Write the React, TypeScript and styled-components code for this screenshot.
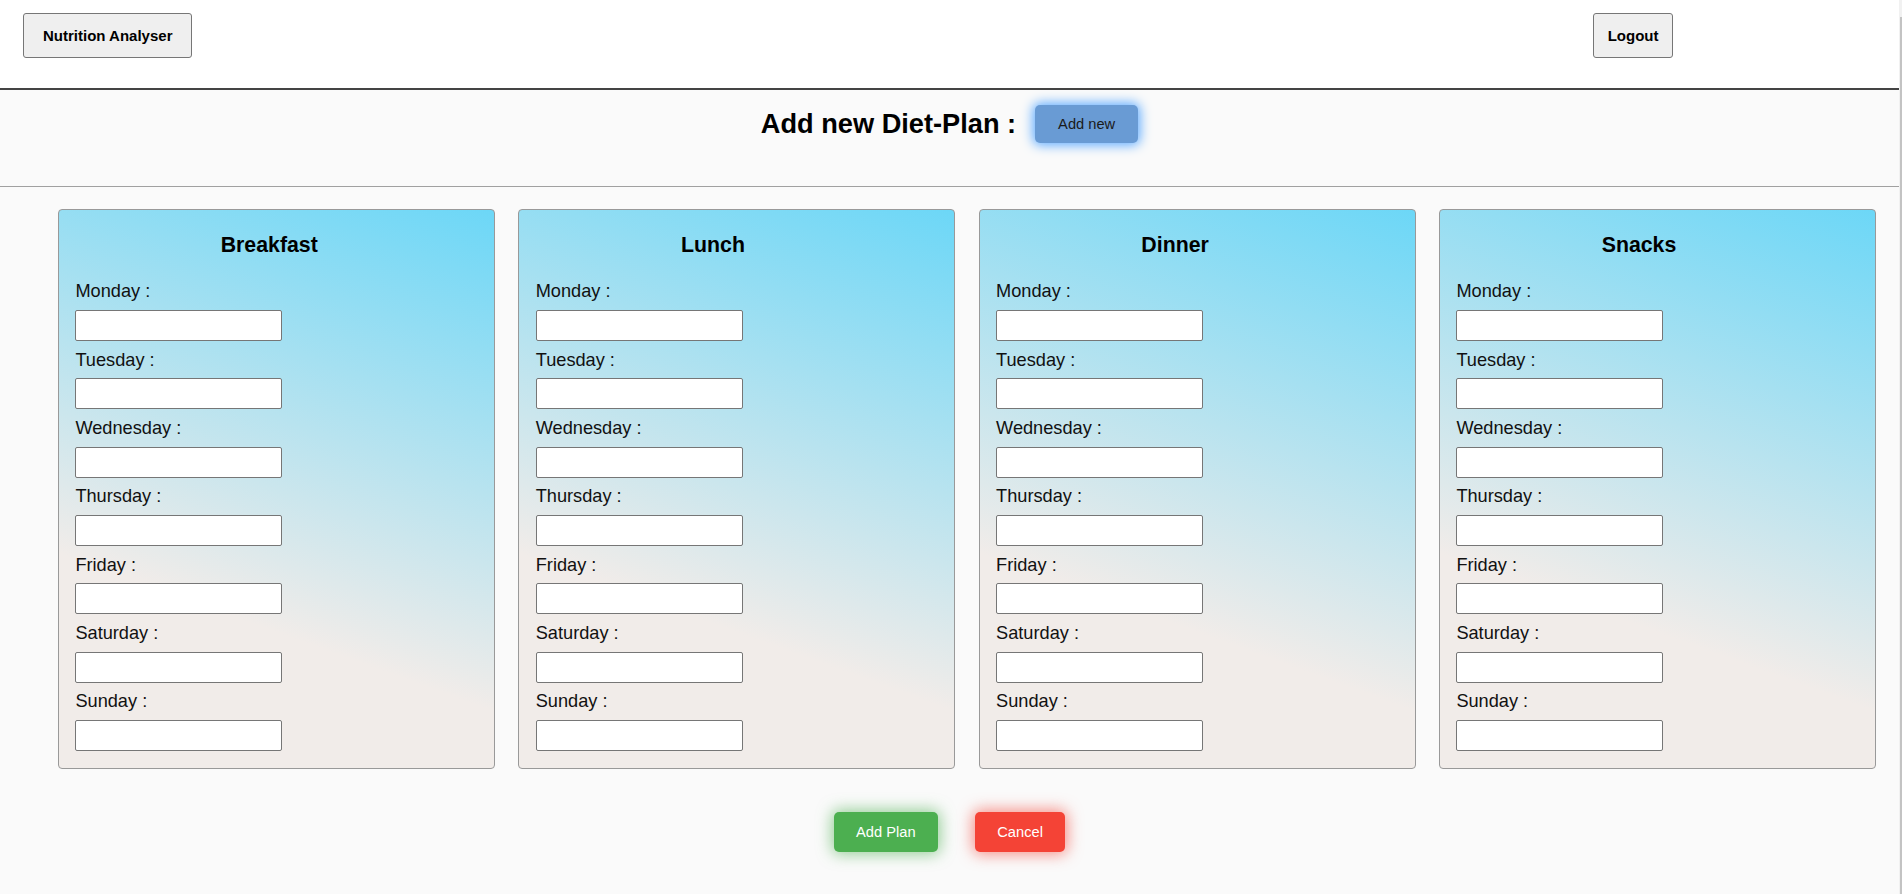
import React from 'react'
import styled, { createGlobalStyle } from 'styled-components'

const meals = ['Breakfast', 'Lunch', 'Dinner', 'Snacks']

const days = [
    'Monday',
    'Tuesday',
    'Wednesday',
    'Thursday',
    'Friday',
    'Saturday',
    'Sunday'
]

const App: React.FC = () => {
    return (
        <Page>
            <GlobalStyle />
            <Main>
                <Header>
                    <NavButton $pad={19}>Nutrition Analyser</NavButton>
                    <NavButton $pad={13.5}>Logout</NavButton>
                </Header>
                <AddBar>
                    <AddTitle>Add new Diet-Plan :</AddTitle>
                    <AddNewButton>Add new</AddNewButton>
                </AddBar>
                <Cards>
                    {meals.map((meal) => (
                        <Card key={meal}>
                            <CardTitle>{meal}</CardTitle>
                            {days.map((day) => (
                                <DayField key={day}>
                                    <DayLabel>{day} :</DayLabel>
                                    <DayInput type='text' />
                                </DayField>
                            ))}
                        </Card>
                    ))}
                </Cards>
                <Actions>
                    <ActionButton $color='#4caf50' $glow='rgba(76, 175, 80, 0.6)'>Add Plan</ActionButton>
                    <ActionButton $color='#f44336' $glow='rgba(244, 67, 54, 0.6)'>Cancel</ActionButton>
                </Actions>
            </Main>
            <ScrollTrack>
                <ScrollThumb />
            </ScrollTrack>
        </Page>
    )
}

export default App

const GlobalStyle = createGlobalStyle`
    body {
        margin: 0;
        background: #fafafa;
        font-family: "Liberation Sans", Arial, sans-serif;
        color: #111;
    }
`

const Page = styled.div`
    display: flex;
    min-height: 894px;
    background: #fafafa;
`

const Main = styled.main`
    flex: 1;
    min-width: 0;
`

const ScrollTrack = styled.div`
    display: flex;
    justify-content: flex-end;
    width: 3px;
    padding-top: 17px;
    box-sizing: border-box;
    background: #f1f1f1;
`

const ScrollThumb = styled.div`
    width: 2px;
    background: #c3c3c3;
`

const Header = styled.header`
    display: flex;
    justify-content: space-between;
    align-items: flex-start;
    height: 90px;
    padding: 13px 226px 0 23px;
    box-sizing: border-box;
    background: #fff;
    border-bottom: 2px solid #444;
`

const NavButton = styled.button<{ $pad: number }>`
    height: 45px;
    padding: 0 ${(p) => p.$pad}px;
    background: #efefef;
    border: 1px solid #767676;
    border-radius: 3px;
    color: #000;
    font-family: "Liberation Sans", Arial, sans-serif;
    font-size: 15px;
    font-weight: bold;
`

const AddBar = styled.section`
    display: flex;
    justify-content: center;
    align-items: flex-start;
    gap: 19px;
    height: 97px;
    padding-top: 15px;
    box-sizing: border-box;
    border-bottom: 1px solid #a0a0a0;
`

const AddTitle = styled.h2`
    margin: 4px 0 0;
    font-size: 27.2px;
    line-height: 30px;
    font-weight: bold;
    color: #000;
`

const AddNewButton = styled.button`
    height: 38px;
    padding: 0 23px;
    border: none;
    border-radius: 5px;
    background: #699bd4;
    box-shadow: 0 0 12px 2px #5aa9ff;
    color: #1a1a1a;
    font-family: "Liberation Sans", Arial, sans-serif;
    font-size: 14.67px;
`

const Cards = styled.div`
    display: flex;
    gap: 23.3px;
    padding: 22px 23px 0 58px;
`

const Card = styled.div`
    flex: 1;
    padding: 23px 16.4px 16.5px;
    border: 1px solid #999;
    border-radius: 4px;
    background: linear-gradient(20deg, #f1ece9 30%, #6cd7f7 100%);
`

const CardTitle = styled.h3`
    margin: 0 0 24.4px 145.3px;
    font-size: 21.3px;
    line-height: 24px;
    font-weight: bold;
    color: #000;
`

const DayField = styled.div`
    display: flex;
    flex-direction: column;
    align-items: flex-start;
    margin-bottom: 8.65px;

    &:last-child {
        margin-bottom: 0;
    }
`

const DayLabel = styled.label`
    display: block;
    margin-bottom: 8.7px;
    font-size: 18.2px;
    line-height: 20px;
    color: #111;
`

const DayInput = styled.input`
    width: 207px;
    height: 31px;
    box-sizing: border-box;
    margin: 0;
    padding: 1px 4px;
    border: 1px solid #767676;
    border-radius: 2px;
    background: #fff;
    font-size: 15px;
`

const Actions = styled.div`
    display: flex;
    justify-content: center;
    gap: 36.5px;
    margin-top: 43.3px;
`

const ActionButton = styled.button<{ $color: string; $glow: string }>`
    height: 40px;
    padding: 0 22.6px;
    border: none;
    border-radius: 5px;
    background: ${(p) => p.$color};
    box-shadow: 0 0 15px 2px ${(p) => p.$glow};
    color: #fff;
    font-family: "Liberation Sans", Arial, sans-serif;
    font-size: 14.67px;
`
